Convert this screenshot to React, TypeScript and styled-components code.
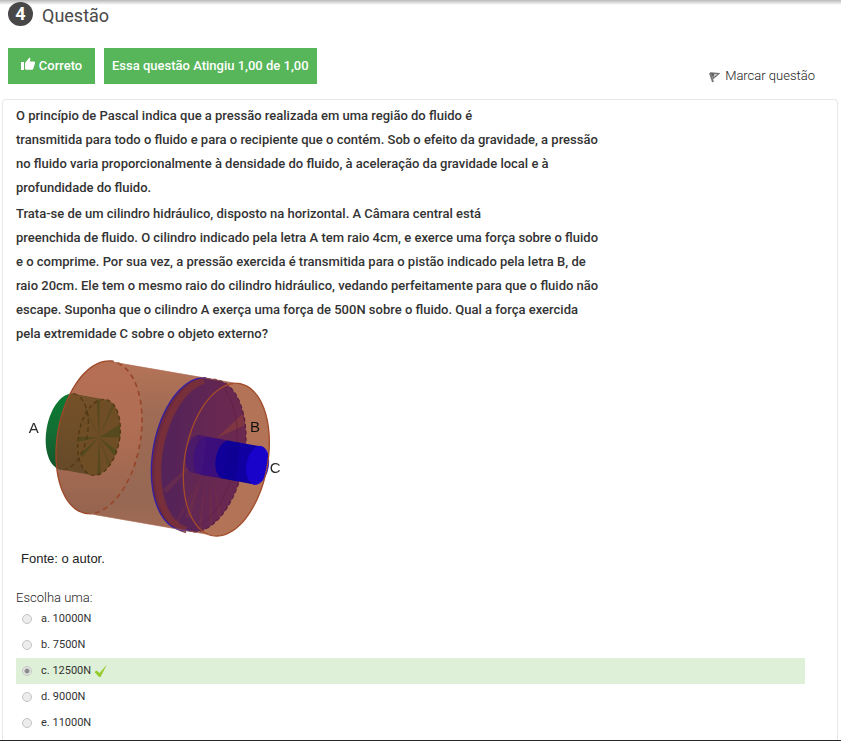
import React, { useState } from "react";
import styled, { createGlobalStyle } from "styled-components";

const GlobalStyle = createGlobalStyle`
  *, *::before, *::after { box-sizing: border-box; }
  body { margin: 0; background: #fff; color: #333; font-family: Roboto, "Liberation Sans", sans-serif; }
`;

const Page = styled.main`
  display: flex;
  flex-direction: column;
  min-height: 100vh;
  border-bottom: 2px solid #2a2626;
  background: linear-gradient(#b8b8b8, #e4e4e4 3px, #fff 5px);
`;

const Header = styled.header`
  display: flex;
  align-items: center;
  gap: 9px;
  height: 32px;
  padding: 0 8px 4px;
`;

const NumberBadge = styled.span`
  display: grid;
  place-items: center;
  width: 25px;
  height: 24px;
  border-radius: 50%;
  background: #484848;
  color: #fff;
  font-size: 18px;
  font-weight: 700;
  line-height: 24px;
`;

const Title = styled.h1`
  margin: 4px 0 0;
  color: #484848;
  font-size: 18px;
  line-height: 24px;
  font-weight: 400;
`;

const StatusBar = styled.div`
  display: flex;
  align-items: flex-start;
  gap: 9px;
  height: 67px;
  padding: 16px 26px 0 8px;
`;

const StatusButton = styled.button`
  display: flex;
  align-items: center;
  justify-content: center;
  gap: 4px;
  min-width: 87px;
  height: 36px;
  padding: 0 8px;
  border: 0;
  background: #56b659;
  color: #fff;
  font: 500 13px/20px Roboto, "Liberation Sans", sans-serif;
  white-space: nowrap;
`;

const FlagLink = styled.a`
  display: flex;
  align-items: center;
  gap: 5px;
  margin: 18px 0 0 auto;
  color: #222;
  font-size: 13px;
  line-height: 20px;
  font-weight: 300;
  text-decoration: none;
`;

const Card = styled.section`
  flex: 1;
  margin: 0 3px 0 2px;
  padding: 4px 32px 4px 13px;
  border: 1px solid #e8e8e8;
  border-bottom: 0;
  border-radius: 4px 4px 0 0;
`;

const Statement = styled.div`
  display: flex;
  flex-direction: column;
  gap: 2px;
  font-size: 13px;
  line-height: 24px;
  font-weight: 500;
`;

const Paragraph = styled.p`
  margin: 0;
`;

const Figure = styled.figure`
  margin: 4px 0 0 4px;
`;

const Drawing = styled.svg`
  display: block;
  width: 280px;
  height: 200px;
`;

const Caption = styled.figcaption`
  padding: 1px 0 0 1px;
  color: #222;
  font: 13px/16px "Liberation Sans", Arial, sans-serif;
`;

const Answers = styled.fieldset`
  min-width: 0;
  margin: 22px 0 0;
  padding: 0;
  border: 0;
`;

const Prompt = styled.legend`
  padding: 0;
  color: #222;
  font-size: 13px;
  line-height: 17px;
  font-weight: 300;
`;

const Option = styled.label<{ $correct?: boolean }>`
  display: flex;
  align-items: center;
  height: 26px;
  padding-left: 6px;
  background: ${(p) => (p.$correct ? "#dff0d8" : "transparent")};
  font-size: 11px;
  line-height: 16px;
`;

const Radio = styled.input`
  appearance: none;
  width: 10px;
  height: 10px;
  margin: 0 9px 0 0;
  border: 1px solid #c4c4c4;
  border-radius: 50%;
  background: #ececec;
  &:checked {
    background: radial-gradient(circle, #8c8c8c 2px, #e4e8e2 3px);
  }
`;

const Tick = styled.svg`
  margin-left: 3px;
`;

/* Tilted ellipse: w and h are half extents, lean is the x shift of the top point. */
function ring(cx: number, cy: number, w: number, h: number, lean: number, from = 0, to = 360) {
  const a = Math.sqrt(w * w - lean * lean);
  const points: string[] = [];
  for (let d = from; d <= to; d += 3) {
    const t = (d * Math.PI) / 180;
    const x = cx + a * Math.cos(t) - lean * Math.sin(t);
    const y = cy + h * Math.sin(t);
    points.push(`${x.toFixed(1)} ${y.toFixed(1)}`);
  }
  return "M" + points.join("L");
}

const big = (cx: number, cy: number, from?: number, to?: number) => ring(cx, cy, 129, 229, 29, from, to);
const small = (cx: number, cy: number, from?: number, to?: number) => ring(cx, cy, 64, 114, 14, from, to);
const rod = (cx: number, cy: number, from?: number, to?: number) => ring(cx, cy, 33, 57, 7, from, to);

function CylinderDrawing() {
  return (
    <Drawing viewBox="0 0 840 600" role="img" aria-label="Cilindro hidráulico com os pistões A, B e C">
      <defs>
        <linearGradient id="shell" x1="0" y1="0" x2="0" y2="1">
          <stop offset="0" stopColor="#b67458" />
          <stop offset="0.3" stopColor="#9f6b54" />
          <stop offset="0.8" stopColor="#966853" />
          <stop offset="1" stopColor="#a56b55" />
        </linearGradient>
        <linearGradient id="cap" x1="0" y1="0" x2="0" y2="1">
          <stop offset="0" stopColor="#b56f54" />
          <stop offset="0.45" stopColor="#b06e54" />
          <stop offset="1" stopColor="#95644f" />
        </linearGradient>
        <linearGradient id="green" x1="0" y1="0" x2="0" y2="1">
          <stop offset="0" stopColor="#0b7930" />
          <stop offset="0.45" stopColor="#127034" />
          <stop offset="1" stopColor="#12552c" />
        </linearGradient>
        <linearGradient id="olive" x1="0" y1="0" x2="0" y2="1">
          <stop offset="0" stopColor="#765128" />
          <stop offset="1" stopColor="#654a29" />
        </linearGradient>
        <linearGradient id="purple" x1="0" y1="0" x2="1" y2="0">
          <stop offset="0" stopColor="#53235a" />
          <stop offset="1" stopColor="#69274f" />
        </linearGradient>
        <clipPath id="inside"><path d={big(237, 262)} /></clipPath>
        <clipPath id="disc"><path d={big(549, 317)} /></clipPath>
      </defs>

      <path d="M265 34L648 100L592 558L208 491Z" fill="url(#shell)" />
      <path d={big(619, 329)} fill="#b27357" />
      <path d={big(237, 262)} fill="url(#cap)" />

      <path d={small(141, 245)} fill="url(#green)" />
      <path d="M155 131L251 149L223 376L127 358Z" fill="url(#green)" />
      <g clipPath="url(#inside)">
        <path d={small(141, 245)} fill="url(#olive)" />
        <path d="M155 131L251 149L223 376L127 358Z" fill="url(#olive)" />
      </g>
      <path d={small(237, 262)} fill="#6f4d25" />
      <g fill="#4c4a1c" opacity="0.75">
        <path d="M237 262L299 224L301 262ZM237 262L174 260L175 275ZM237 262L292 303L282 315Z" />
        <path d="M237 262L230 150L239 150ZM237 262L232 374L242 374ZM237 262L180 312L186 322Z" />
        <path d="M237 262L276 163L283 170ZM237 262L265 350L271 342ZM237 262L193 181L199 176Z" opacity="0.5" />
      </g>
      <path d={small(237, 262)} fill="none" stroke="#513815" strokeWidth="4" strokeDasharray="12 9" />
      <path d={small(141, 245, -86, 94)} fill="none" stroke="#513815" strokeWidth="4" strokeDasharray="14 10" />
      <path d="M155 132L251 149M127 358L223 376" stroke="#704a27" strokeWidth="2" />

      <path d={big(237, 262, 90, 270)} fill="none" stroke="#9d4828" strokeWidth="4" />
      <path d={big(237, 262, -90, 90)} fill="none" stroke="#964629" strokeWidth="5" strokeDasharray="15 12" />

      <path d={big(523, 312)} fill="#6a2941" />
      <path d="M552 83L578 88L520 546L494 541Z" fill="#5a2549" />
      <path d={big(549, 317)} fill="url(#purple)" />
      <path d={ring(542, 315, 128, 226, 29, 96, 262)} fill="none" stroke="#7a3038" strokeWidth="20" opacity="0.85" />
      <g clipPath="url(#disc)">
        <path d={big(619, 329)} fill="#79304f" opacity="0.25" />
        <g fill="#914239" opacity="0.55">
          <path d="M590 264L667 192L677 225Z" />
          <path d="M538 320L428 418L440 430Z" opacity="0.5" />
          <path d="M548 370L494 500L510 505ZM558 370L535 535L544 537ZM568 370L570 535L578 530ZM577 365L597 517L605 504ZM548 370L460 525L469 530Z" opacity="0.4" />
        </g>
        <path d={big(523, 312, -75, 75)} fill="none" stroke="#602042" strokeWidth="2" />
      </g>
      <path d={big(523, 312, 84, 275)} fill="none" stroke="#351fa5" strokeWidth="4" />
      <path d={big(549, 317, -90, 90)} fill="none" stroke="#582044" strokeWidth="4" strokeDasharray="12 8" />

      <path d={rod(529, 312)} fill="#4b1a68" />
      <path d="M536 255L626 272L612 386L522 369Z" fill="#49156f" />
      <path d={rod(553, 318)} fill="#3d117d" opacity="0.75" />
      <path d="M560 261L626 272L612 386L546 375Z" fill="#3b0e7b" />
      <path d={rod(619, 329)} fill="#100099" />
      <path d="M626 272L720 289L706 404L612 386Z" fill="#1000a1" />
      <path d="M626 272L660 278L646 392L612 386Z" fill="#0c008c" opacity="0.55" />
      <path d={rod(713, 346)} fill="#1903cb" stroke="#1802d6" strokeWidth="3" />

      <path d={big(619, 329)} fill="none" stroke="#a34c2a" strokeWidth="4" />
      <path d="M265 34L648 100M208 491L592 558" stroke="#ad6d54" strokeWidth="2" />

      <g fontFamily='"Liberation Sans", Arial, sans-serif' fontSize="45" fill="#292929">
        <text x="26" y="250">A</text>
        <text x="690" y="246" fill="#111">B</text>
        <text x="749" y="368">C</text>
      </g>
    </Drawing>
  );
}

const ThumbIcon = () => (
  <svg width="14" height="18" viewBox="0 0 14 18" fill="#fff" aria-hidden="true">
    <path d="M0 5h3v8H0zM4 6L8 1c.6-.7 1.6-.2 1.4.8L8.8 4.6h4c1 0 1.5.8 1.2 1.7l-1.7 5.4c-.3.8-.8 1.1-1.5 1.1H5.2C4.5 12.8 4 12.3 4 11.6z" />
  </svg>
);

const FlagIcon = () => (
  <svg width="11" height="14" viewBox="0 0 11 14" aria-hidden="true">
    <path d="M1 4l3 9" fill="none" stroke="#777" strokeWidth="2" />
    <path d="M2 4l8 .5-5.5 4.7z" fill="#ccc" stroke="#777" strokeWidth="1.3" />
    <path d="M2 4l3 1-.5 3z" fill="#555" />
  </svg>
);

const options = ["a. 10000N", "b. 7500N", "c. 12500N", "d. 9000N", "e. 11000N"];
const correct = 2;

export default function App() {
  const [selected, setSelected] = useState(correct);
  return (
    <>
      <GlobalStyle />
      <Page>
        <Header>
          <NumberBadge>4</NumberBadge>
          <Title>Questão</Title>
        </Header>
        <StatusBar>
          <StatusButton type="button"><ThumbIcon />Correto</StatusButton>
          <StatusButton type="button">Essa questão Atingiu 1,00 de 1,00</StatusButton>
          <FlagLink href="#marcar"><FlagIcon />Marcar questão</FlagLink>
        </StatusBar>
        <Card>
          <Statement>
            <Paragraph>
              O princípio de Pascal indica que a pressão realizada em uma região do fluido é<br />
              transmitida para todo o fluido e para o recipiente que o contém. Sob o efeito da gravidade, a pressão<br />
              no fluido varia proporcionalmente à densidade do fluido, à aceleração da gravidade local e à<br />
              profundidade do fluido.
            </Paragraph>
            <Paragraph>
              Trata-se de um cilindro hidráulico, disposto na horizontal. A Câmara central está<br />
              preenchida de fluido. O cilindro indicado pela letra A tem raio 4cm, e exerce uma força sobre o fluido<br />
              e o comprime. Por sua vez, a pressão exercida é transmitida para o pistão indicado pela letra B, de<br />
              raio 20cm. Ele tem o mesmo raio do cilindro hidráulico, vedando perfeitamente para que o fluido não<br />
              escape. Suponha que o cilindro A exerça uma força de 500N sobre o fluido. Qual a força exercida<br />
              pela extremidade C sobre o objeto externo?
            </Paragraph>
          </Statement>
          <Figure>
            <CylinderDrawing />
            <Caption>Fonte: o autor.</Caption>
          </Figure>
          <Answers>
            <Prompt>Escolha uma:</Prompt>
            {options.map((text, i) => (
              <Option key={text} $correct={i === correct}>
                <Radio type="radio" name="resposta" checked={selected === i} onChange={() => setSelected(i)} />
                {text}
                {i === correct && (
                  <Tick width="14" height="14" viewBox="0 0 14 14" aria-hidden="true">
                    <path d="M.5 8l2-1.5L5.5 9 13 .5 6.5 13H5z" fill="#96cb2d" />
                  </Tick>
                )}
              </Option>
            ))}
          </Answers>
        </Card>
      </Page>
    </>
  );
}
